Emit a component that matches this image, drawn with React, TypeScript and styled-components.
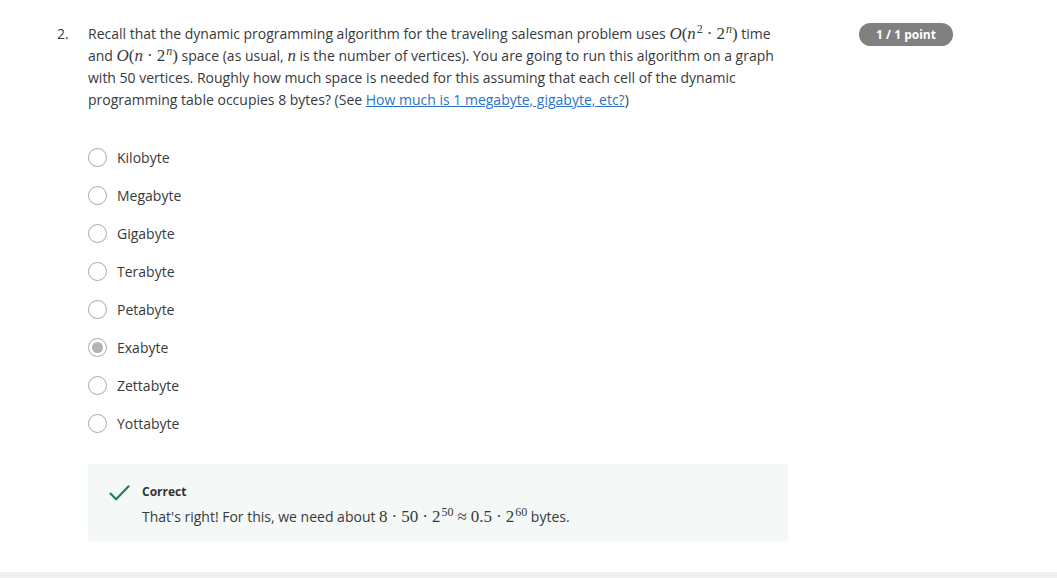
import styled, { createGlobalStyle } from 'styled-components'

const GlobalStyle = createGlobalStyle`
  body {
    margin: 0;
    background: #ffffff;
    font-family: "Open Sans", "Liberation Sans", sans-serif;
    color: #373a3c;
  }
`

const options = [
    'Kilobyte',
    'Megabyte',
    'Gigabyte',
    'Terabyte',
    'Petabyte',
    'Exabyte',
    'Zettabyte',
    'Yottabyte',
]

const selected = 'Exabyte'

const App = () => {
    return (
        <>
            <GlobalStyle />
            <Page>
                <Question>
                    <Number>2.</Number>
                    <Body>
                        <Prompt>
                            Recall that the dynamic programming algorithm for the traveling salesman problem uses{' '}
                            <Math><I>O</I>(<I>n</I><Sup>2</Sup><Dot>·</Dot>2<Sup><I>n</I></Sup>)</Math> time
                            and <Math><I>O</I>(<I>n</I><Dot>·</Dot>2<Sup><I>n</I></Sup>)</Math> space (as usual,{' '}
                            <Math><I>n</I></Math> is the number of vertices). You are going to run this algorithm on a graph
                            with 50 vertices. Roughly how much space is needed for this assuming that each cell of the dynamic
                            programming table occupies 8 bytes? (See <A href="#">How much is 1 megabyte, gigabyte, etc?</A>)
                        </Prompt>

                        <Options>
                            {options.map((o) => (
                                <Option key={o}>
                                    <Radio $checked={o === selected} />
                                    <Label>{o}</Label>
                                </Option>
                            ))}
                        </Options>

                        <Feedback>
                            <Check viewBox="0 0 24 24">
                                <path d="M2 12.5 L8.5 19 L22 5" fill="none" stroke="#1f8354" strokeWidth="2.4" />
                            </Check>
                            <FeedbackText>
                                <FeedbackTitle>Correct</FeedbackTitle>
                                <FeedbackBody>
                                    That's right! For this, we need about{' '}
                                    <Math>8<Dot>·</Dot>50<Dot>·</Dot>2<Sup>50</Sup><Dot>≈</Dot>0.5<Dot>·</Dot>2<Sup>60</Sup></Math>{' '}
                                    bytes.
                                </FeedbackBody>
                            </FeedbackText>
                        </Feedback>
                    </Body>
                    <Badge>1 / 1 point</Badge>
                </Question>
            </Page>
            <Footer />
        </>
    )
}

export default App

const Page = styled.div`
padding: 23px 0 31px 57px;
`

const Question = styled.div`
display: flex;
align-items: flex-start;
`

const Number = styled.div`
width: 31px;
font-size: 14px;
line-height: 22px;
`

const Body = styled.div`
width: 700px;
`

const Prompt = styled.div`
font-size: 14px;
line-height: 22px;
`

const Math = styled.span`
font-family: "Liberation Serif", "DejaVu Serif", serif;
font-size: 17px;
line-height: 1;
white-space: nowrap;
`

const I = styled.i`
font-family: "Liberation Serif", serif;
font-size: inherit;
`

const Sup = styled.sup`
font-size: 12px;
vertical-align: 6px;
line-height: 0;
margin-left: 1px;
`

const Dot = styled.span`
margin: 0 4px;
`

const A = styled.a`
color: #2a73cc;
text-decoration: underline;
`

const Options = styled.div`
margin-top: 27px;
display: flex;
flex-direction: column;
`

const Option = styled.div`
height: 38px;
display: flex;
align-items: center;
`

const Radio = styled.span<{ $checked: boolean }>`
box-sizing: border-box;
width: 19px;
height: 19px;
border-radius: 50%;
border: 1.5px solid #a8a8a8;
margin-right: 10px;
display: flex;
align-items: center;
justify-content: center;
&::after {
  content: '';
  width: 11px;
  height: 11px;
  border-radius: 50%;
  background: ${(p) => (p.$checked ? '#b3b3b3' : 'transparent')};
}
`

const Label = styled.span`
font-size: 14px;
`

const Feedback = styled.div`
margin-top: 22px;
height: 77px;
box-sizing: border-box;
background: #f4f8f7;
display: flex;
align-items: flex-start;
padding: 18px 20px;
`

const Check = styled.svg`
width: 23px;
height: 23px;
margin-right: 11px;
margin-top: -1px;
`

const FeedbackText = styled.div`
display: flex;
flex-direction: column;
`

const FeedbackTitle = styled.div`
font-size: 12px;
font-weight: 700;
line-height: 20px;
color: #333;
`

const FeedbackBody = styled.div`
font-size: 14px;
line-height: 24px;
margin-top: 3px;
`

const Badge = styled.div`
margin-left: 71px;
width: 94px;
height: 23px;
border-radius: 12px;
background: #808080;
color: white;
font-size: 12px;
font-weight: 700;
display: flex;
align-items: center;
justify-content: center;
`

const Footer = styled.div`
height: 8px;
background: #f0f0f0;
`
